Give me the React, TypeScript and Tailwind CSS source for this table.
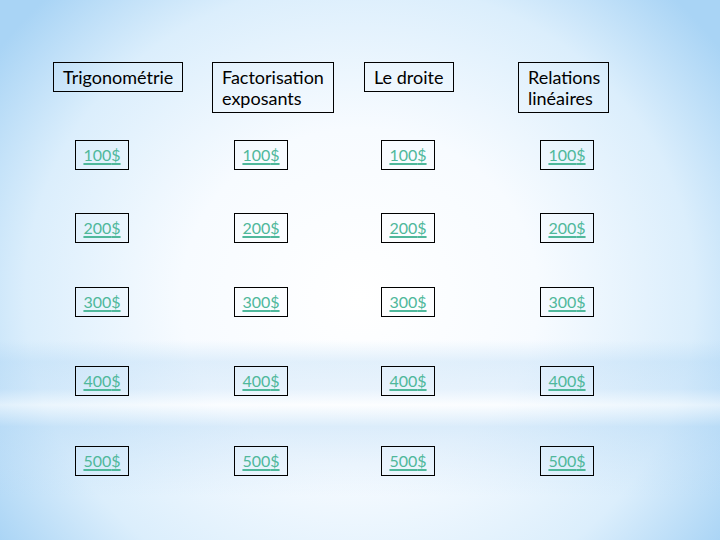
import React from 'react';

type Category = {
  lines: string[];
  boxClass: string;
  valueIndent: string;
};

const categories: Category[] = [
  { lines: ['Trigonométrie'], boxClass: 'w-[130px]', valueIndent: 'ml-[22px]' },
  { lines: ['Factorisation', 'exposants'], boxClass: 'w-[122px]', valueIndent: 'ml-[22px]' },
  { lines: ['Le droite'], boxClass: 'w-[90px]', valueIndent: 'ml-[17px]' },
  { lines: ['Relations', 'linéaires'], boxClass: 'w-[91px]', valueIndent: 'ml-[22px]' },
];

const values = [100, 200, 300, 400, 500];

export default function App() {
  return (
    <main className="relative w-[720px] h-[540px] overflow-hidden pt-[62px] pl-[53px] font-['Lato','Open_Sans',sans-serif] bg-[linear-gradient(to_bottom,transparent_63%,rgba(165,208,243,0.3)_67%,rgba(175,212,244,0.25)_72%,rgba(255,255,255,0.45)_75%,rgba(165,208,243,0.35)_79%,rgba(175,212,244,0.18)_86%,transparent_92%),radial-gradient(ellipse_62%_78%_at_50%_55%,#ffffff_0%,#f7fbff_40%,#dbeefc_75%,#a9d4f5_100%)]">
      <div className="grid grid-cols-[159px_152px_154px_120px] grid-rows-[78px_73px_74px_79px_80px_29px]">
        {/* Header row */}
        {categories.map((cat) => (
          <div key={cat.lines[0]}>
            <div
              className={`${cat.boxClass} border border-black pl-[9px] pt-[4px] pb-[3px] text-[18px] leading-[21px] text-black`}
            >
              {cat.lines.map((l) => (
                <div key={l}>{l}</div>
              ))}
            </div>
          </div>
        ))}

        {/* Money rows */}
        {values.map((v) =>
          categories.map((cat) => (
            <div key={`${cat.lines[0]}-${v}`}>
              <div
                className={`${cat.valueIndent} w-[54px] h-[30px] border border-black flex items-center justify-center`}
              >
                <a
                  href="#"
                  className="text-[16px] leading-none text-[#4fb89b] underline underline-offset-2 decoration-[1.5px]"
                >
                  {v}$
                </a>
              </div>
            </div>
          ))
        )}
      </div>
    </main>
  );
}
